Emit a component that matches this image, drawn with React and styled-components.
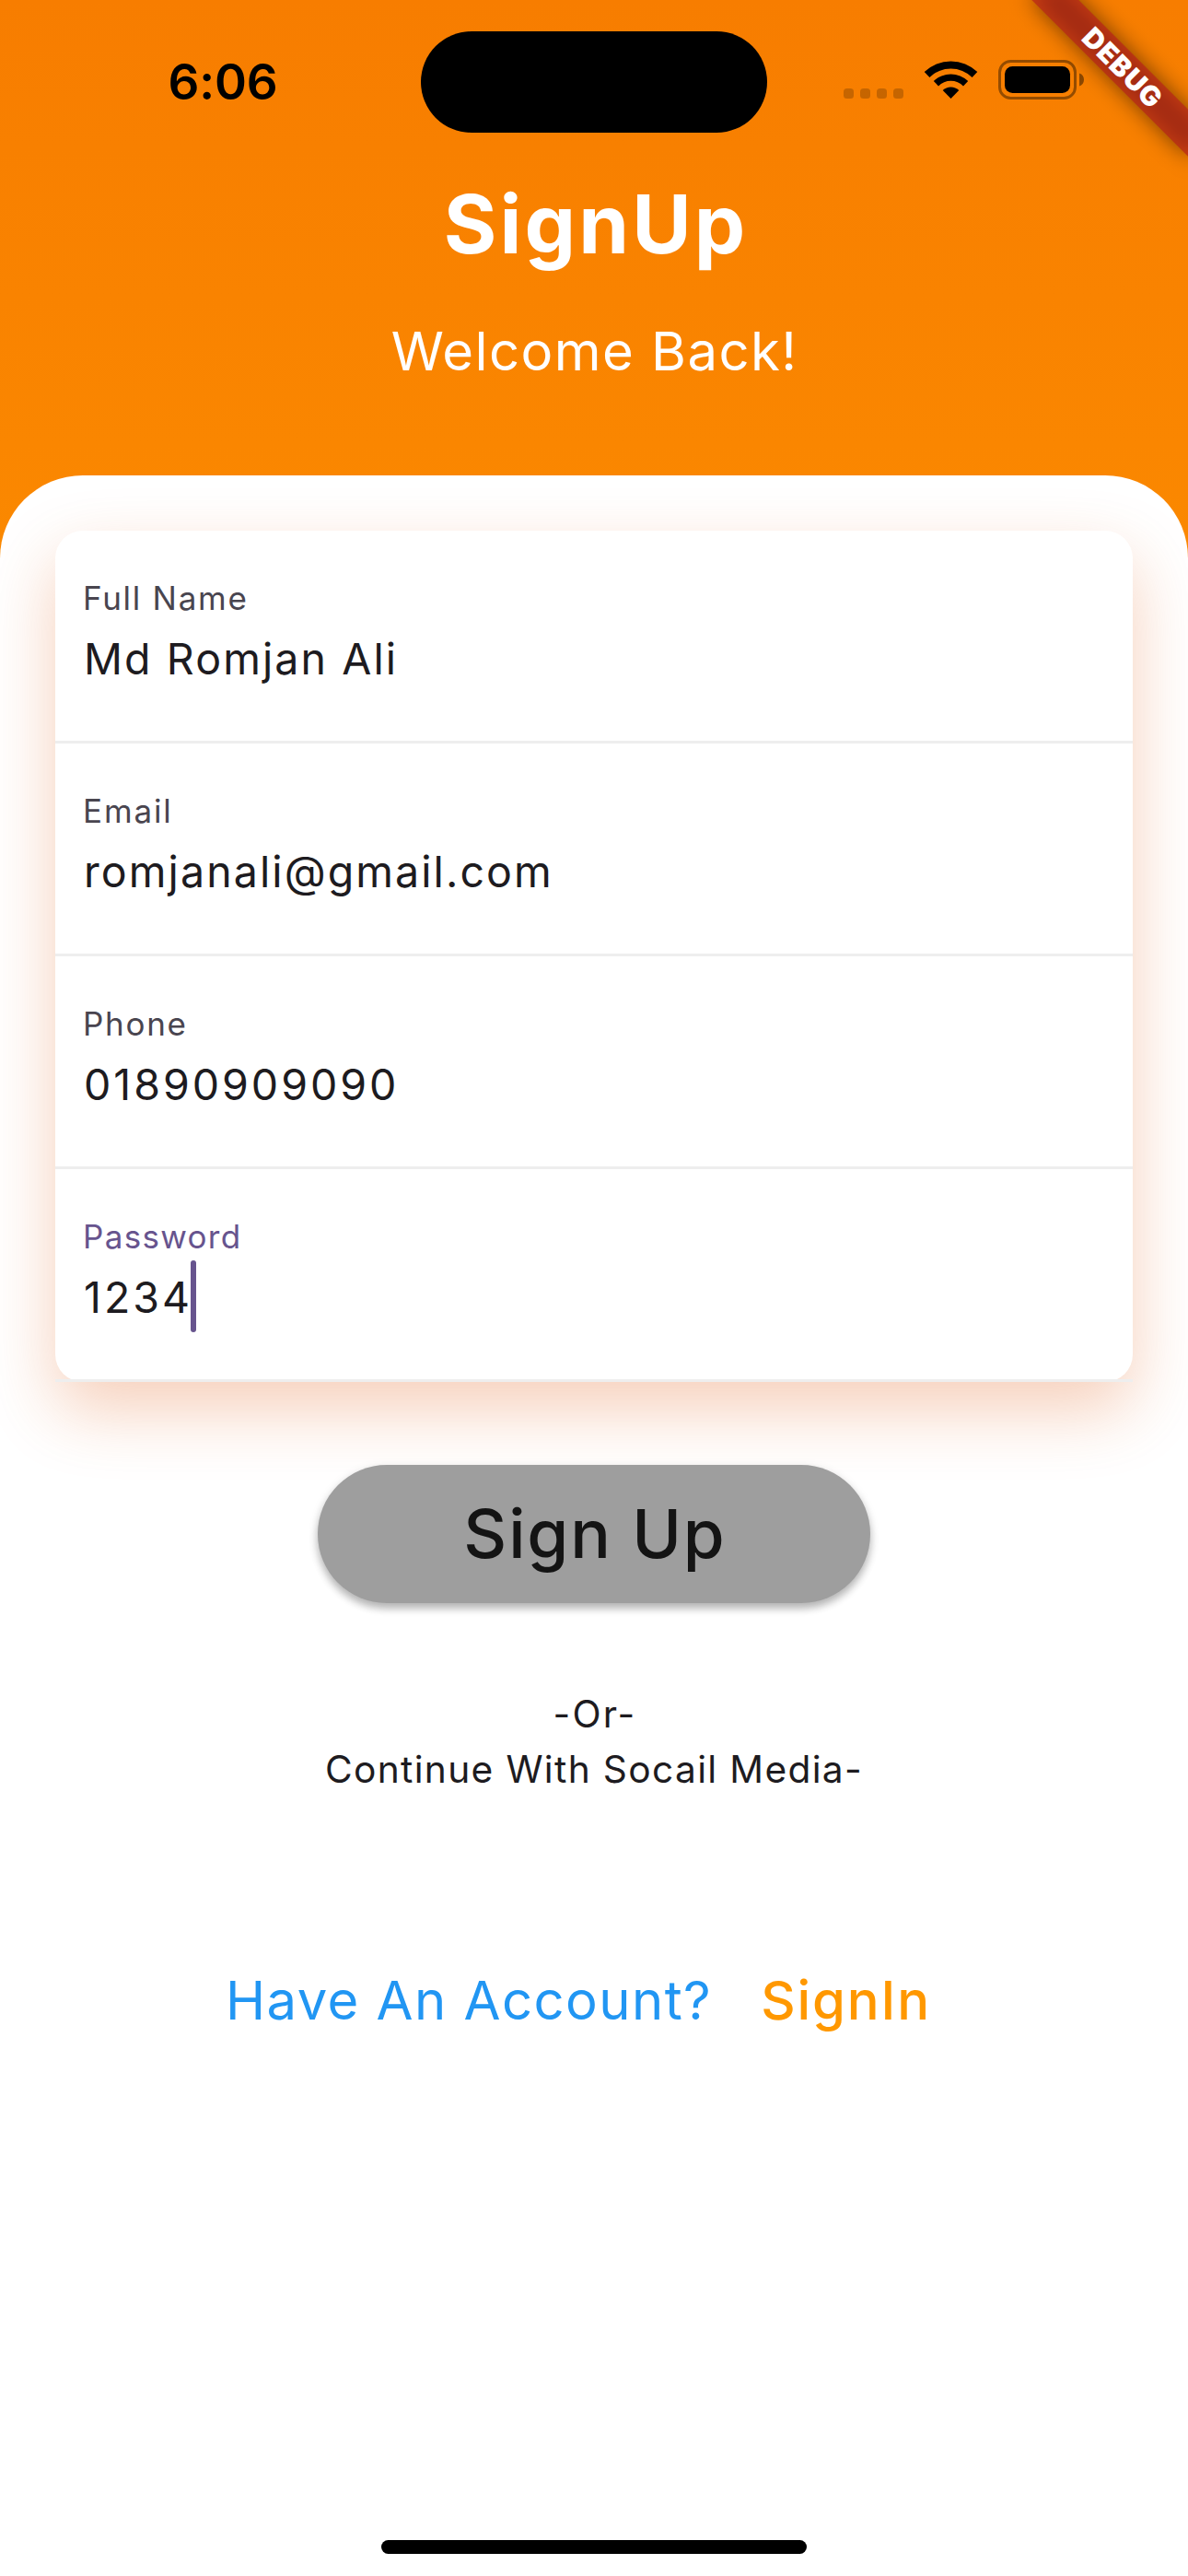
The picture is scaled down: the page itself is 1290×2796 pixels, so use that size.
import React from "react";
import styled, { createGlobalStyle } from "styled-components";

const GlobalStyle = createGlobalStyle`
  *, *::before, *::after { box-sizing: border-box; }
  html, body { margin: 0; padding: 0; background: #fff; }
  body { font-family: Inter, "Liberation Sans", sans-serif; }
`;

const Screen = styled.main`
  position: relative;
  display: flex;
  flex-direction: column;
  width: 1290px;
  height: 2796px;
  overflow: hidden;
  background: linear-gradient(180deg, #f77d00 0, #fb8900 640px);
`;

const Header = styled.header`
  display: flex;
  flex-direction: column;
  height: 516px;
  flex: none;
`;

const StatusBar = styled.div`
  display: grid;
  grid-template-columns: 1fr 376px 1fr;
  align-items: center;
  height: 177px;
`;

const Clock = styled.time`
  padding-left: 182.5px;
  font-size: 53px;
  font-weight: 600;
  line-height: 60px;
  letter-spacing: -0.2px;
  color: #000;
`;

const Island = styled.div`
  height: 110px;
  margin-top: 1px;
  border-radius: 55px;
  background: #000;
`;

const Indicators = styled.div`
  display: flex;
  align-items: flex-end;
  gap: 23px;
  height: 43px;
  padding-left: 83px;
  margin-top: -4px;
`;

const SignalDots = styled.div`
  display: flex;
  gap: 7px;
  padding-bottom: 1px;
`;

const Dot = styled.i`
  width: 11px;
  height: 11px;
  border-radius: 3.5px;
  background: rgba(0, 0, 0, 0.2);
`;

const Glyph = styled.svg`
  display: block;
  flex: none;
  overflow: visible;
  margin-bottom: ${(p) => p.$lift || 0}px;
`;

const Heading = styled.div`
  display: flex;
  flex-direction: column;
  align-items: center;
  gap: 47.6px;
  padding-top: 12px;
  color: #fff;
`;

const Title = styled.h1`
  margin: 0;
  padding-left: 4px;
  font-size: 88px;
  font-weight: 700;
  line-height: 108px;
  letter-spacing: 3.15px;
`;

const Subtitle = styled.p`
  margin: 0;
  padding-left: 1px;
  font-size: 58px;
  font-weight: 400;
  line-height: 72px;
  letter-spacing: 1.43px;
`;

const Panel = styled.section`
  display: flex;
  flex: 1;
  flex-direction: column;
  align-items: center;
  padding: 60px 60px 24px;
  border-radius: 90px 90px 0 0;
  background: #fff;
`;

const Card = styled.div`
  align-self: stretch;
  border-radius: 30px;
  background: #fff;
  box-shadow: 0 30px 72px rgba(225, 95, 27, 0.3);
`;

const Field = styled.label`
  display: flex;
  flex-direction: column;
  gap: 5px;
  height: 231px;
  padding: 52.3px 30px 0;
  border-bottom: 3px solid #eee;
`;

const FieldName = styled.span`
  font-size: 35px;
  line-height: 42px;
  letter-spacing: ${(p) => p.$spacing}px;
  color: ${(p) => (p.$focused ? "#67548e" : "#49454f")};
`;

const FieldValue = styled.span`
  display: flex;
  align-items: center;
  height: 78px;
  padding-left: 1px;
  font-size: 46.5px;
  line-height: 58px;
  letter-spacing: ${(p) => (p.$numeric ? 2.97 : 2.09)}px;
  color: #1d1b20;
`;

const ValueText = styled.span`
  padding-top: 2px;
`;

const Caret = styled.i`
  width: 6px;
  height: 78px;
  margin-left: -2px;
  border-radius: 3px;
  background: #67548e;
`;

const SubmitButton = styled.button`
  width: 600px;
  height: 150px;
  margin-top: 90px;
  padding: 0 0 0 2px;
  border: 0;
  border-radius: 75px;
  background: #9e9e9e;
  box-shadow: 0 6px 9px rgba(0, 0, 0, 0.24), 0 3px 12px rgba(0, 0, 0, 0.1);
  font-family: inherit;
  font-size: 72.7px;
  font-weight: 500;
  line-height: 90px;
  letter-spacing: 1.88px;
  color: #141414;
`;

const Divider = styled.div`
  display: flex;
  flex-direction: column;
  align-items: center;
  margin-top: 91px;
  font-size: 40.7px;
  line-height: 60px;
  letter-spacing: 1.33px;
  color: #1d1b20;
`;

const Or = styled.span`
  padding-left: 2px;
  letter-spacing: 2.16px;
`;

const AccountRow = styled.div`
  display: flex;
  gap: 53px;
  margin-top: 183.6px;
  padding-right: 34px;
  font-size: 58px;
  line-height: 72px;
`;

const Prompt = styled.span`
  letter-spacing: 1.43px;
  color: #2196f3;
`;

const SignInLink = styled.a`
  font-weight: 500;
  letter-spacing: 1.86px;
  color: #ff9800;
`;

const HomeIndicator = styled.div`
  width: 462px;
  height: 15px;
  margin-top: auto;
  border-radius: 8px;
  background: #000;
`;

const DebugBanner = styled.div`
  position: absolute;
  top: 84px;
  left: 1170px;
  width: 240px;
  height: 36px;
  transform: rotate(45deg);
  transform-origin: 120px -84px;

  &::before {
    content: "";
    position: absolute;
    inset: 0;
    background: rgba(0, 0, 0, 0.5);
    filter: blur(12px);
  }
`;

const DebugRibbon = styled.div`
  position: relative;
  height: 36px;
  padding-left: 4px;
  background: rgba(183, 28, 28, 0.627);
  font-size: 30px;
  font-weight: 900;
  line-height: 36px;
  letter-spacing: 0.9px;
  text-align: center;
  color: #fff;
`;

const FIELDS = [
  { name: "Full Name", value: "Md Romjan Ali", spacing: 1.72 },
  { name: "Email", value: "romjanali@gmail.com", spacing: 1.85 },
  { name: "Phone", value: "01890909090", spacing: 1.7, numeric: true },
  { name: "Password", value: "1234", spacing: 1.31, numeric: true, focused: true },
];

function WifiIcon() {
  return (
    <Glyph width="57" height="42" viewBox="0 0 57 42" $lift={1}>
      <path d="M-0.3 13.1A41.3 41.3 0 0 1 57.3 13.1L51.6 18.9A33 33 0 0 0 5.4 18.9Z" />
      <path d="M9.8 23A27 27 0 0 1 47.2 23L42 28.4A19 19 0 0 0 15 28.4Z" />
      <path d="M19.7 33A12.8 12.8 0 0 1 37.3 33L28.5 42Z" />
    </Glyph>
  );
}

function BatteryIcon() {
  return (
    <Glyph width="93" height="43" viewBox="0 0 93 43">
      <rect x="1.5" y="1.5" width="82" height="40" rx="12" fill="none" stroke="#000" strokeOpacity="0.4" strokeWidth="3" />
      <rect x="7" y="7" width="71" height="29" rx="8.5" />
      <path d="M88 14.5C91 15.5 93 18 93 21.5S91 27.5 88 28.5Z" fillOpacity="0.43" />
    </Glyph>
  );
}

export default function App() {
  return (
    <>
      <GlobalStyle />
      <Screen>
        <Header>
          <StatusBar>
            <Clock>6:06</Clock>
            <Island />
            <Indicators>
              <SignalDots>
                <Dot />
                <Dot />
                <Dot />
                <Dot />
              </SignalDots>
              <WifiIcon />
              <BatteryIcon />
            </Indicators>
          </StatusBar>
          <Heading>
            <Title>SignUp</Title>
            <Subtitle>Welcome Back!</Subtitle>
          </Heading>
        </Header>
        <Panel>
          <Card>
            {FIELDS.map((f) => (
              <Field key={f.name}>
                <FieldName $spacing={f.spacing} $focused={f.focused}>{f.name}</FieldName>
                <FieldValue $numeric={f.numeric}>
                  <ValueText>{f.value}</ValueText>
                  {f.focused && <Caret />}
                </FieldValue>
              </Field>
            ))}
          </Card>
          <SubmitButton>Sign Up</SubmitButton>
          <Divider>
            <Or>-Or-</Or>
            <span>Continue With Socail Media-</span>
          </Divider>
          <AccountRow>
            <Prompt>Have An Account?</Prompt>
            <SignInLink>SignIn</SignInLink>
          </AccountRow>
          <HomeIndicator />
        </Panel>
        <DebugBanner>
          <DebugRibbon>DEBUG</DebugRibbon>
        </DebugBanner>
      </Screen>
    </>
  );
}
